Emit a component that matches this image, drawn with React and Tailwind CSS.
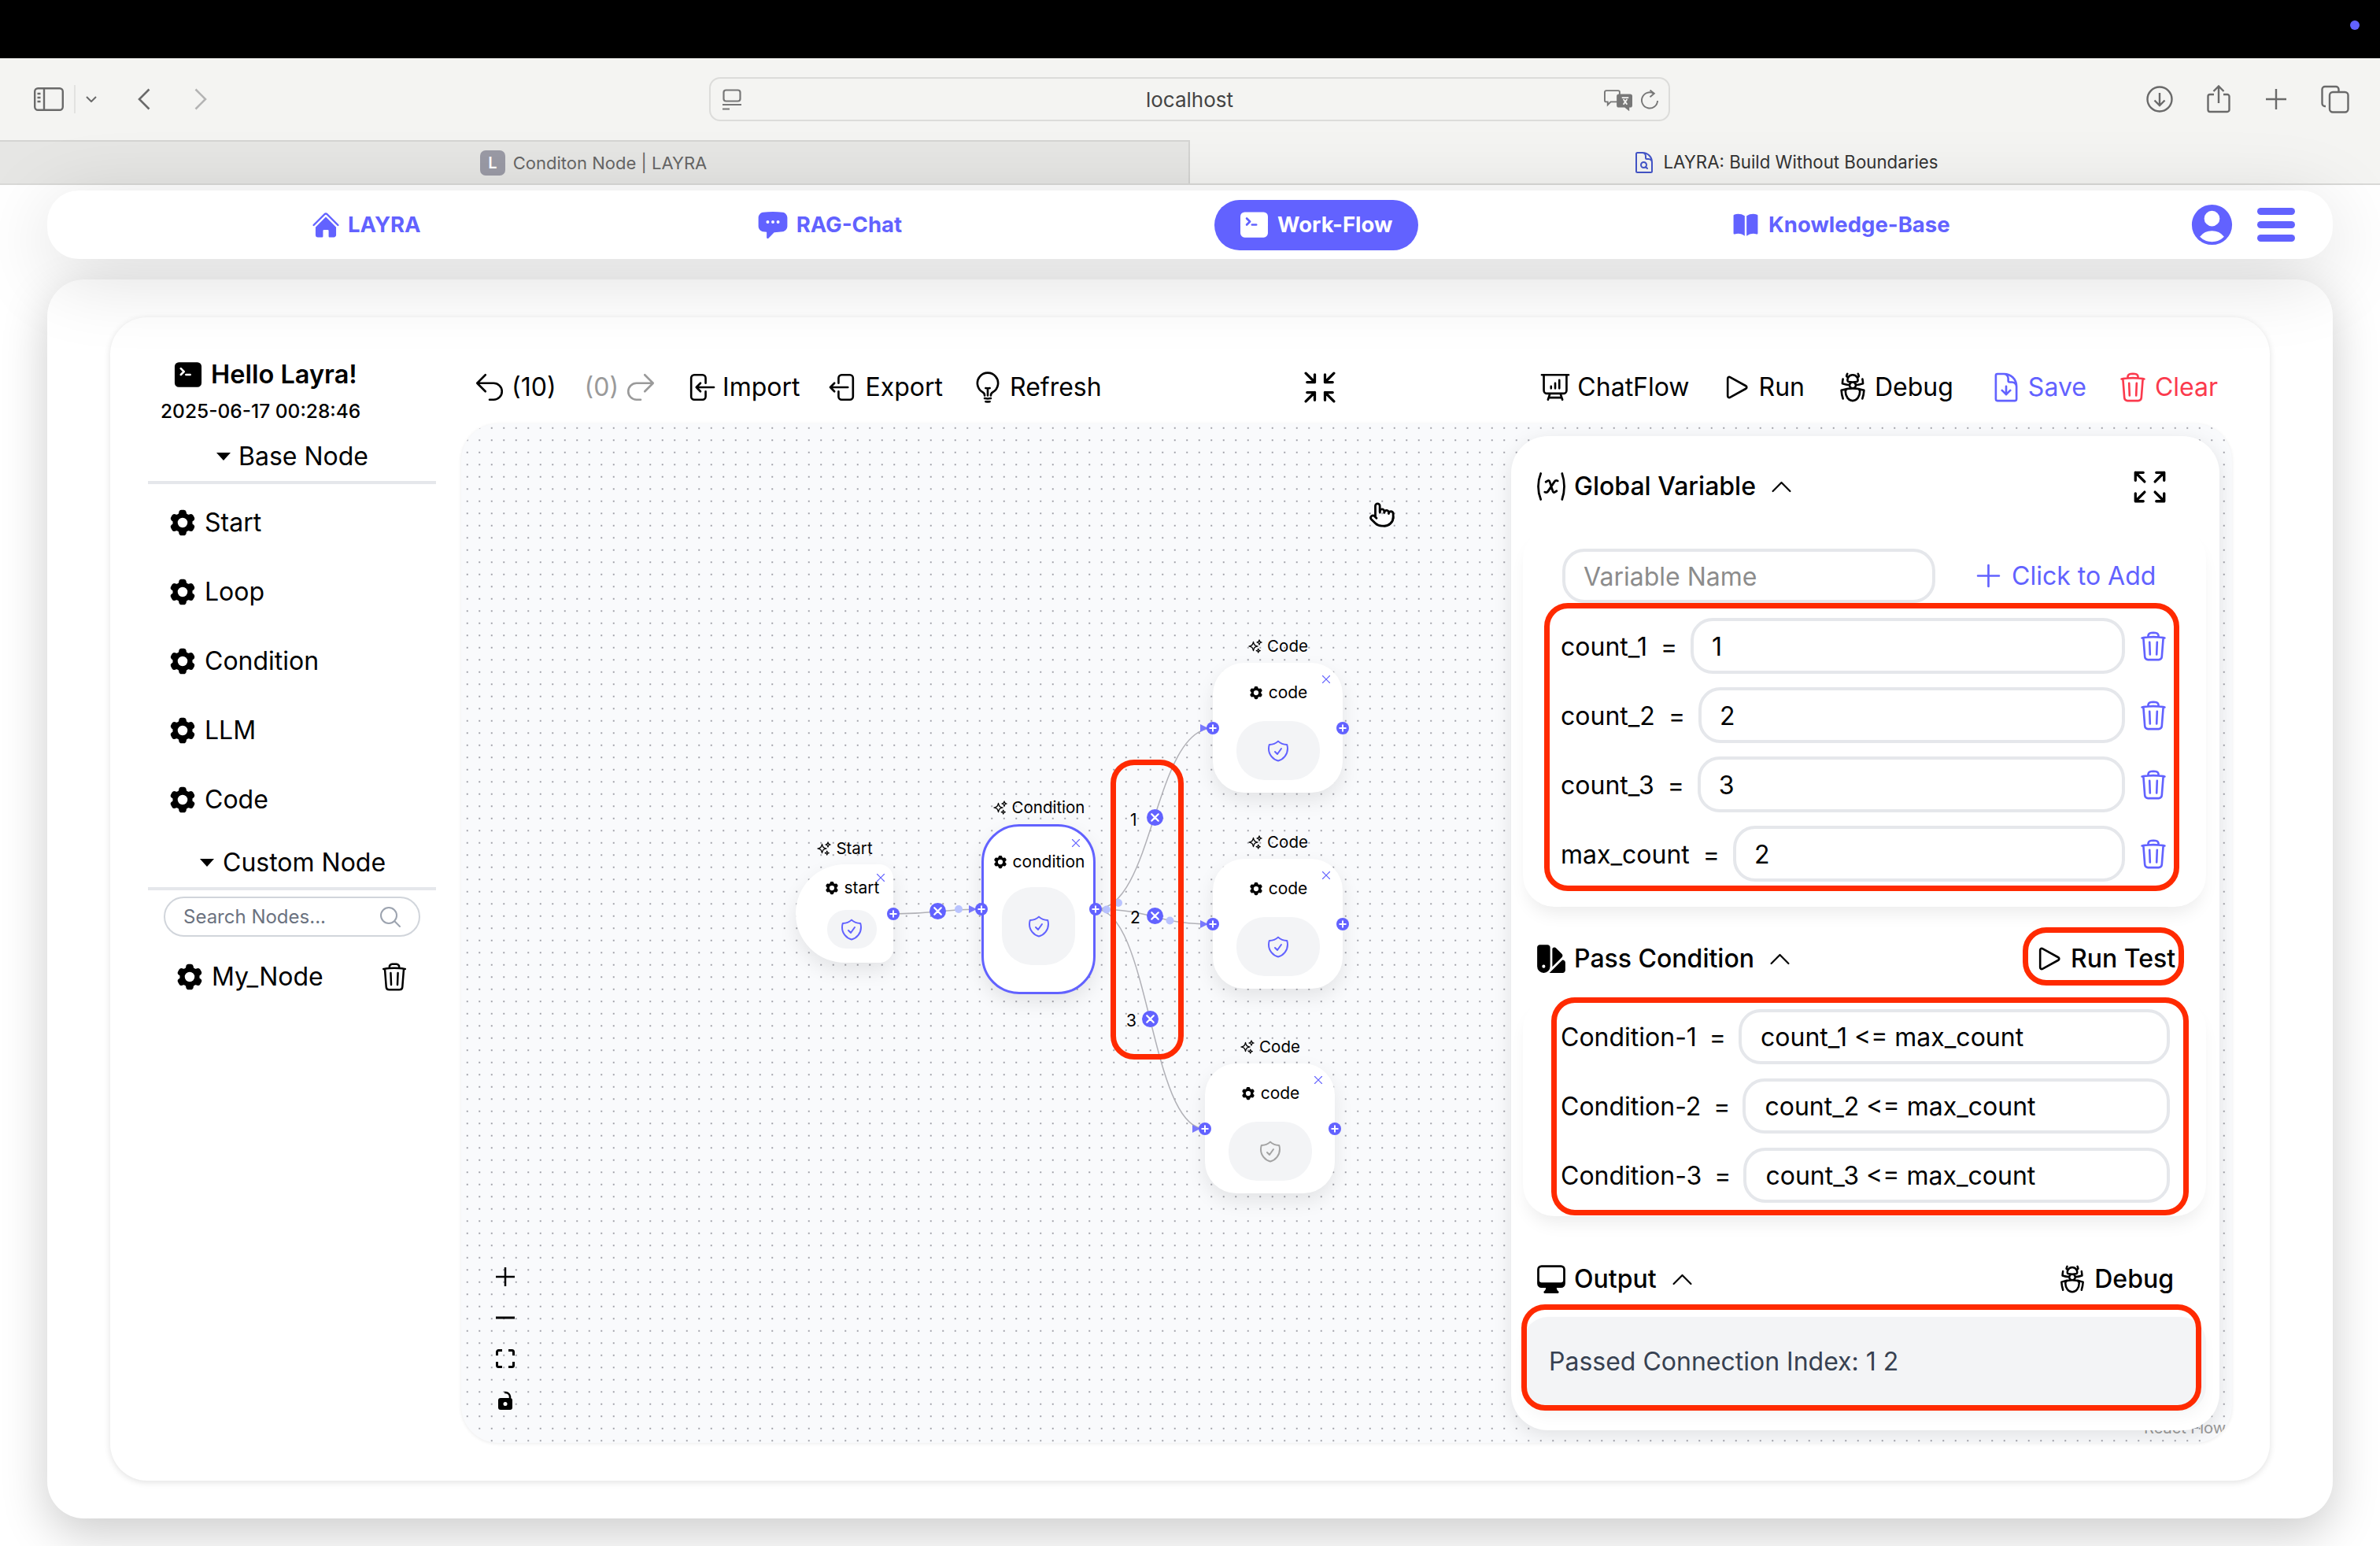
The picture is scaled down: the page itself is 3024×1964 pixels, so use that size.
import {
  HiHome, HiChatBubbleLeftEllipsis, HiCommandLine, HiBookOpen, HiUserCircle, HiCog6Tooth, HiSwatch,
  HiComputerDesktop, HiXMark, HiOutlineArrowUturnLeft, HiOutlineArrowUturnRight, HiOutlineArrowLeftEndOnRectangle,
  HiOutlineArrowLeftStartOnRectangle, HiOutlineLightBulb, HiOutlineArrowsPointingIn, HiOutlineArrowsPointingOut,
  HiOutlinePresentationChartBar, HiOutlinePlay, HiOutlineBugAnt, HiOutlineDocumentArrowDown, HiOutlineTrash,
  HiOutlineVariable, HiOutlineChevronUp, HiOutlinePlus, HiOutlineMagnifyingGlass, HiOutlineSparkles,
  HiOutlineShieldCheck, HiOutlineDocumentMagnifyingGlass,
} from "react-icons/hi2";
import { Pointer } from "lucide-react";

function Caret({ className }) {
  return (
    <svg viewBox="0 0 18 10" className={`h-[10px] w-[18px] ${className || ""}`}>
      <path d="M0 0h18l-9 10z" fill="#000" />
    </svg>
  );
}

function ChromeBar() {
  return (
    <div className="flex h-[104px] items-center bg-[#f4f4f2] pl-[43px] pr-[39px] text-[#6a6a6a]">
      <svg viewBox="0 0 38 30" className="h-[30px] w-[38px]" fill="none" stroke="currentColor" strokeWidth="2.4">
        <rect x="1.2" y="1.2" width="35.6" height="27.6" rx="4" />
        <path d="M13 1v28" />
        <path d="M4.5 8h4M4.5 13h4M4.5 18h4" />
      </svg>
      <div className="ml-[13px] h-[36px] w-[2px] bg-[#e3e3e1]" />
      <svg viewBox="0 0 14 8" className="ml-[13px] h-[8px] w-[14px]" fill="none" stroke="currentColor" strokeWidth="2">
        <path d="M1 1l6 6 6-6" />
      </svg>
      <svg viewBox="0 0 16 28" className="ml-[52px] h-[28px] w-[16px]" fill="none" stroke="currentColor" strokeWidth="2.6">
        <path d="M14.5 1.5L2 14l12.5 12.5" />
      </svg>
      <svg viewBox="0 0 16 28" className="ml-[56px] h-[28px] w-[16px] text-[#b4b4b4]" fill="none" stroke="currentColor" strokeWidth="2.6">
        <path d="M1.5 1.5L14 14 1.5 26.5" />
      </svg>
      <div className="relative ml-[638px] flex h-[56px] w-[1221px] items-center justify-center rounded-[14px] border-2 border-[#dcdcda] text-[26px] text-[#444]">
        <svg viewBox="0 0 24 27" className="absolute left-[15px] top-[13px] h-[27px] w-[24px]" fill="none" stroke="#777" strokeWidth="2.2">
          <rect x="1.5" y="1.5" width="21" height="14" rx="3" />
          <path d="M0 20h24M0 25.500h9" />
        </svg>
        localhost
        <svg viewBox="0 0 38 28" className="absolute right-[46px] top-[13px] h-[28px] w-[36px]" fill="none" stroke="#777" strokeWidth="2">
          <path d="M3 1.500h16a2 2 0 0 1 2 2v11a2 2 0 0 1-2 2H9l-4 4v-4H3a2 2 0 0 1-2-2v-11a2 2 0 0 1 2-2z" />
          <path d="M20 7h15a2 2 0 0 1 2 2v12a2 2 0 0 1-2 2h-2v4l-5-4h-8a2 2 0 0 1-2-2V9a2 2 0 0 1 2-2z" fill="#777" />
          <path d="M24 11h9M26 20l5-7M31 20l-5-7" stroke="#f4f4f2" />
        </svg>
        <svg viewBox="0 0 24 26" className="absolute right-[12px] top-[14px] h-[26px] w-[23px]" fill="none" stroke="#777" strokeWidth="2">
          <path d="M17 4.500A10.500 10.500 0 1 0 22 14" />
          <path d="M12 0l5.500 4.500L12 9" />
        </svg>
      </div>
      <div className="ml-auto flex items-center gap-[41px] text-[#6a6a6a]">
        <svg viewBox="0 0 34 34" className="mr-[2px] size-[34px]" fill="none" stroke="currentColor" strokeWidth="2.4">
          <circle cx="17" cy="17" r="15.500" />
          <path d="M17 9v16M10.500 18.500L17 25l6.500-6.500" />
        </svg>
        <svg viewBox="0 0 30 36" className="mr-[4px] h-[36px] w-[30px]" fill="none" stroke="currentColor" strokeWidth="2.4">
          <path d="M9 12H4a2.500 2.500 0 0 0-2.500 2.500v17A2.500 2.500 0 0 0 4 34h22a2.500 2.500 0 0 0 2.500-2.500v-17A2.500 2.500 0 0 0 26 12h-5" />
          <path d="M15 23V2M8.500 8L15 1.500 21.500 8" />
        </svg>
        <svg viewBox="0 0 26 26" className="mr-[3px] size-[26px]" fill="none" stroke="currentColor" strokeWidth="2.4">
          <path d="M13 0v26M0 13h26" />
        </svg>
        <svg viewBox="0 0 36 36" className="size-[36px]" fill="none" stroke="currentColor" strokeWidth="2.4">
          <path d="M6 27H5a3.500 3.500 0 0 1-3.500-3.500v-18A3.500 3.500 0 0 1 5 2h14a3.500 3.500 0 0 1 3.500 3.500V9" />
          <rect x="11" y="9" width="23.500" height="25.500" rx="4" />
        </svg>
      </div>
    </div>
  );
}

function TabBar() {
  return (
    <div className="flex h-[57px] border-b-2 border-[#d9d9d7] leading-none">
      <div className="flex w-[1512px] items-center justify-center gap-[10px] border-r-2 border-t-2 border-[#d4d4d2] bg-[#e6e6e4] pr-[2px] pt-[1px] text-[22px] text-[#666]">
        <div className="flex size-[32px] items-center justify-center rounded-[7px] bg-[#9a9aa5] text-[20px] font-semibold text-white">L</div>
        Conditon Node | LAYRA
      </div>
      <div className="flex flex-1 items-center justify-center gap-[8px] bg-[#f4f4f2] pt-[2px] text-[22.250px] text-[#333]">
        <HiOutlineDocumentMagnifyingGlass className="size-[32px] text-[#4355c8]" />
        LAYRA: Build Without Boundaries
      </div>
    </div>
  );
}

function NavBar() {
  return (
    <div className="relative z-10 mx-[60px] mt-[7px] flex h-[87px] items-center rounded-[40px] bg-white pl-[335px] text-[27.500px] font-bold text-[#6262ff] shadow-[0_20px_100px_rgba(0,0,0,0.15)]">
      <div className="flex items-center gap-[9px]">
        <HiHome className="size-[38px]" />
        LAYRA
      </div>
      <div className="ml-[426px] flex items-center gap-[9px]">
        <HiChatBubbleLeftEllipsis className="size-[42px]" />
        RAG-Chat
      </div>
      <div className="ml-[397px] flex h-[64px] w-[259px] items-center gap-[8px] rounded-full bg-[#6262ff] pl-[29px] text-white">
        <HiCommandLine className="size-[43px]" />
        Work-Flow
      </div>
      <div className="ml-[397px] flex items-center gap-[10px]">
        <HiBookOpen className="size-[38px]" />
        Knowledge-Base
      </div>
      <HiUserCircle className="ml-[301px] size-[63px]" />
      <div className="ml-[26px] flex w-[48px] flex-col gap-[8px]">
        <div className="h-[9px] rounded-full bg-[#6262ff]" />
        <div className="h-[9px] rounded-full bg-[#6262ff]" />
        <div className="h-[9px] rounded-full bg-[#6262ff]" />
      </div>
    </div>
  );
}

const baseNodes = ["Start", "Loop", "Condition", "LLM", "Code"];

function Sidebar() {
  return (
    <div className="w-[366px] shrink-0 pt-[56px] text-black">
      <div className="flex h-[34px] items-center gap-[8px] pl-[30px] text-[32.500px] font-semibold">
        <HiCommandLine className="size-[42px]" />
        Hello Layra!
      </div>
      <div className="mt-[14px] h-[30px] pl-[16px] text-[24.500px] font-medium leading-[30px]">2025-06-17 00:28:46</div>
      <div className="mt-[23px] flex h-[55px] items-center border-b-4 border-[#e5e7eb] pb-[11px] pl-[87px] text-[32px]">
        <Caret className="mr-[10px]" />
        Base Node
      </div>
      <div className="mt-[5px]">
        {baseNodes.map((name) => (
          <div key={name} className="flex h-[88px] items-center gap-[8px] pl-[24px] text-[32px]">
            <HiCog6Tooth className="size-[40px]" />
            {name}
          </div>
        ))}
      </div>
      <div className="mt-[16px] flex h-[55px] items-center border-b-4 border-[#e5e7eb] pb-[11px] pl-[66px] text-[32px]">
        <Caret className="mr-[11px]" />
        Custom Node
      </div>
      <div className="ml-[20px] mt-[8px] flex h-[51px] w-[326px] items-center justify-between rounded-full border-2 border-[#d1d5db] pl-[23px] pr-[20px] text-[24px] text-[#6b7280]">
        Search Nodes...
        <HiOutlineMagnifyingGlass className="size-[32px] text-[#9ca3af]" />
      </div>
      <div className="mt-[31px] flex h-[40px] items-center gap-[8px] pl-[33px] pr-[33px] text-[32px]">
        <HiCog6Tooth className="size-[40px]" />
        My_Node
        <HiOutlineTrash className="ml-auto size-[40px]" />
      </div>
    </div>
  );
}

function Tool({ icon: Icon, children, className }) {
  return (
    <div className={`flex items-center gap-[7px] ${className || ""}`}>
      <Icon className="size-[42px]" />
      {children}
    </div>
  );
}

function Toolbar() {
  return (
    <div className="flex h-[135px] items-center pl-[15px] pr-[18px] pt-[43px] text-[32px] text-black">
      <Tool icon={HiOutlineArrowUturnLeft}>(10)</Tool>
      <div className="ml-[36px] flex items-center gap-[7px] text-[#9a9a9a]">
        (0)
        <HiOutlineArrowUturnRight className="size-[42px]" />
      </div>
      <Tool icon={HiOutlineArrowLeftEndOnRectangle} className="ml-[34px]">Import</Tool>
      <Tool icon={HiOutlineArrowLeftStartOnRectangle} className="ml-[34px]">Export</Tool>
      <Tool icon={HiOutlineLightBulb} className="ml-[36px]">Refresh</Tool>
      <div className="flex flex-1 justify-center">
        <HiOutlineArrowsPointingIn className="size-[52px]" />
      </div>
      <div className="flex items-center">
        <Tool icon={HiOutlinePresentationChartBar}>ChatFlow</Tool>
        <Tool icon={HiOutlinePlay} className="ml-[39px]">Run</Tool>
        <Tool icon={HiOutlineBugAnt} className="ml-[40px]">Debug</Tool>
        <Tool icon={HiOutlineDocumentArrowDown} className="ml-[46px] text-[#6262ff]">Save</Tool>
        <Tool icon={HiOutlineTrash} className="ml-[38px] text-[#fb3a4d]">Clear</Tool>
      </div>
    </div>
  );
}

function Handle({ className }) {
  return (
    <svg viewBox="0 0 16 16" className={`absolute top-1/2 size-[16px] -translate-y-1/2 ${className}`}>
      <circle cx="8" cy="8" r="8" fill="#6262ff" />
      <path d="M8 3.500v9M3.500 8h9" stroke="#fff" strokeWidth="2" />
    </svg>
  );
}

function FlowNode({ title, name, className, chip, label, shield, close, leftHandle, rightHandle }) {
  return (
    <div className={`absolute flex flex-col items-center bg-white shadow-[0_10px_24px_rgba(0,0,0,0.09)] ${className}`}>
      <div className={`absolute bottom-full left-0 right-0 flex h-[28px] items-center justify-center gap-[5px] text-[20.500px] text-black ${label}`}>
        <HiOutlineSparkles className="size-[20px]" />
        {title}
      </div>
      <HiXMark className={`absolute size-[18px] text-[#6262ff] ${close}`} />
      <div className="flex h-[28px] items-center gap-[6px] text-[21px] text-black">
        <HiCog6Tooth className="size-[20px]" />
        {name}
      </div>
      <div className={`flex items-center justify-center bg-[#f3f4f6] ${chip}`}>
        <HiOutlineShieldCheck className={`size-[32px] ${shield || "text-[#6262ff]"}`} />
      </div>
      {leftHandle && <Handle className={leftHandle} />}
      <Handle className={rightHandle} />
    </div>
  );
}

function EdgeX({ className }) {
  return (
    <div className={`absolute flex size-[21px] items-center justify-center rounded-full bg-[#6262ff] ${className}`}>
      <HiXMark className="size-[17px] stroke-[1.5] text-white" />
    </div>
  );
}

function Edges() {
  return (
    <svg className="absolute inset-0 size-full" fill="none" stroke="#b1b1b7" strokeWidth="1.500">
      <path d="M549 623C605 623 605 617 661 617" />
      <path d="M806 617C880 617 880 387 955 387" />
      <path d="M806 617C880 617 880 636 955 636" />
      <path d="M806 617C875 617 875 896 945 896" />
      <g fill="#7b7bff" stroke="none">
        <path d="M645 612l10 5-10 5z" />
        <path d="M939 382l10 5-10 5z" />
        <path d="M939 631l10 5-10 5z" />
        <path d="M929 891l10 5-10 5z" />
      </g>
      <g fill="#b9c3ff" stroke="none">
        <circle cx="632" cy="617" r="5" />
        <circle cx="820" cy="617.500" r="5" />
        <circle cx="835" cy="609" r="5" />
        <circle cx="900.500" cy="631.500" r="5" />
      </g>
    </svg>
  );
}

function FlowControls() {
  return (
    <div className="absolute left-[44px] top-[1072px] flex w-[24px] flex-col items-center gap-[28px] text-black">
      <svg viewBox="0 0 24 24" className="size-[24px]" fill="none" stroke="currentColor" strokeWidth="2.500">
        <path d="M12 0v24M0 12h24" />
      </svg>
      <svg viewBox="0 0 24 24" className="size-[24px]" fill="none" stroke="currentColor" strokeWidth="3">
        <path d="M0 12h24" />
      </svg>
      <svg viewBox="0 0 24 24" className="size-[24px]" fill="none" stroke="currentColor" strokeWidth="3">
        <path d="M1.500 8V3.500a2 2 0 0 1 2-2H8M16 1.500h4.500a2 2 0 0 1 2 2V8M22.500 16v4.500a2 2 0 0 1-2 2H16M8 22.500H3.500a2 2 0 0 1-2-2V16" />
      </svg>
      <svg viewBox="0 0 24 26" className="h-[26px] w-[24px]">
        <path d="M11 3a6 6 0 0 1 7 5v3" fill="none" stroke="#000" strokeWidth="2.500" />
        <rect x="3" y="10" width="18" height="15" rx="3" fill="#000" />
        <circle cx="12" cy="17.500" r="2.500" fill="#fff" />
      </svg>
    </div>
  );
}

function FieldBox({ children, height, inset }) {
  return (
    <div className={`flex flex-1 items-center rounded-[28px] border-[4px] border-[#e5e7eb] bg-white pt-[2px] text-[32px] text-black ${height} ${inset}`}>
      {children}
    </div>
  );
}

const variables = [
  { name: "count_1", value: "1" },
  { name: "count_2", value: "2" },
  { name: "count_3", value: "3" },
  { name: "max_count", value: "2" },
];

const conditions = [
  { name: "Condition-1", value: "count_1 <= max_count" },
  { name: "Condition-2", value: "count_2 <= max_count" },
  { name: "Condition-3", value: "count_3 <= max_count" },
];

function SectionTitle({ icon: Icon, children, className }) {
  return (
    <div className={`flex items-center text-[32px] font-medium text-black ${className || ""}`}>
      <Icon className="mr-[7px] size-[44px]" />
      {children}
      <HiOutlineChevronUp className="ml-[15px] size-[35px]" />
    </div>
  );
}

function GlobalPanel() {
  return (
    <div className="absolute right-[16px] top-[16px] flex h-[1263px] w-[900px] flex-col rounded-[47px] bg-white shadow-[0_6px_24px_rgba(0,0,0,0.1)]">
      <div className="mt-[32px] flex h-[64px] items-center justify-between pl-[29px] pr-[62px]">
        <SectionTitle icon={HiOutlineVariable}>Global Variable</SectionTitle>
        <HiOutlineArrowsPointingOut className="size-[53px] text-black" />
      </div>

      <div className="ml-[15px] mr-[17px] mt-[20px] h-[482px] rounded-[40px] bg-white pl-[27px] pr-[34px] pt-[27px] shadow-[0_14px_22px_-6px_rgba(0,0,0,0.08)]">
        <div className="flex h-[69px] items-center">
          <div className="ml-[23px] flex h-[69px] w-[474px] items-center rounded-[28px] border-[4px] border-[#e5e7eb] pl-[23px] pt-[2px] text-[32px] text-[#8c8c8c]">
            Variable Name
          </div>
          <div className="ml-[46px] flex items-center gap-[8px] text-[32px] text-[#6262ff]">
            <HiOutlinePlus className="size-[43px]" />
            Click to Add
          </div>
        </div>
        <div className="flex h-[366px] flex-col gap-[17px] rounded-[30px] border-[7px] border-[#ff2a00] pl-[14px] pr-[5px] pt-[12px]">
          {variables.map((v) => (
            <div key={v.name} className="flex items-center text-[32px] text-black">
              <span className="pt-[2px]">{v.name}</span>
              <span className="mx-[17px] pt-[2px]">=</span>
              <FieldBox height="h-[71px]" inset="pl-[23px]">{v.value}</FieldBox>
              <HiOutlineTrash className="ml-[15px] size-[42px] text-[#6262ff]" />
            </div>
          ))}
        </div>
      </div>

      <div className="mt-[26px] flex h-[74px] items-center justify-between pl-[29px] pr-[45px]">
        <SectionTitle icon={HiSwatch} className="pt-[6px]">Pass Condition</SectionTitle>
        <div className="flex h-[74px] w-[205px] items-center gap-[6px] rounded-[30px] border-[7px] border-[#ff2a00] pl-[6px] pt-[6px] text-[32px] font-medium text-black">
          <HiOutlinePlay className="size-[42px]" />
          Run Test
        </div>
      </div>

      <div className="ml-[15px] mr-[17px] mt-[15px] h-[278px] rounded-[40px] bg-white pl-[36px] pr-[22px] shadow-[0_14px_22px_-6px_rgba(0,0,0,0.08)]">
        <div className="flex h-[277px] flex-col gap-[18px] rounded-[30px] border-[7px] border-[#ff2a00] pl-[5px] pr-[17px] pt-[8px]">
          {conditions.map((c) => (
            <div key={c.name} className="flex items-center text-[32px] text-black">
              <span className="pt-[2px]">{c.name}</span>
              <span className="mx-[16px] pt-[2px]">=</span>
              <FieldBox height="h-[70px]" inset="pl-[24px]">{c.value}</FieldBox>
            </div>
          ))}
        </div>
      </div>

      <div className="mt-[48px] flex h-[64px] items-center justify-between pl-[29px] pr-[58px]">
        <SectionTitle icon={HiComputerDesktop}>Output</SectionTitle>
        <div className="flex items-center gap-[8px] text-[32px] font-medium text-black">
          <HiOutlineBugAnt className="size-[40px]" />
          Debug
        </div>
      </div>

      <div className="relative ml-[15px] mr-[17px] mt-[16px] flex h-[120px] items-center rounded-[32px] bg-[#f3f4f6] pb-[6px] pl-[33px] text-[32px] text-[#374151] shadow-[0_8px_16px_rgba(0,0,0,0.03)]">
        Passed Connection Index: 1 2
        <div className="absolute -left-[2px] -top-[16px] right-[6px] h-[135px] rounded-[30px] border-[7px] border-[#ff2a00]" />
      </div>
    </div>
  );
}

function Canvas() {
  return (
    <div className="relative h-[1295px] overflow-hidden rounded-[47px] bg-[#f9fafc] bg-[radial-gradient(circle,#a0a0a8_0.8px,transparent_0.9px)] bg-[length:15.5px_15.5px] bg-[position:0_-2px] shadow-[0_1px_4px_rgba(0,0,0,0.08)]">
      <Edges />
      <FlowNode
        title="Start"
        name="start"
        label="mb-[6px]"
        close="right-[7px] top-[8px]"
        rightHandle="-right-[8px]"
        className="left-[425px] top-[560px] h-[125px] w-[124px] rounded-bl-[70px] rounded-br-[20px] rounded-tl-[70px] rounded-tr-[20px] pl-[18px] pt-[16px]"
        chip="mt-[14px] h-[49px] w-[63px] rounded-[24px]"
      />
      <FlowNode
        title="Condition"
        name="condition"
        label="mb-[10px]"
        close="right-[13px] top-[12px]"
        leftHandle="-left-[11px]"
        rightHandle="-right-[11px]"
        className="left-[661px] top-[509px] h-[216px] w-[145px] rounded-[48px] border-[3px] border-[#6262ff] pt-[31px]"
        chip="mt-[18px] h-[99px] w-[93px] rounded-[38px]"
      />
      <FlowNode
        title="Code"
        name="code"
        label="mb-[7px]"
        close="right-[12px] top-[12px]"
        leftHandle="-left-[8px]"
        rightHandle="-right-[8px]"
        className="left-[955px] top-[304px] h-[165px] w-[165px] rounded-[40px] pt-[24px]"
        chip="mt-[22px] h-[75px] w-[106px] rounded-[36px]"
      />
      <FlowNode
        title="Code"
        name="code"
        label="mb-[7px]"
        close="right-[12px] top-[12px]"
        leftHandle="-left-[8px]"
        rightHandle="-right-[8px]"
        className="left-[955px] top-[553px] h-[165px] w-[165px] rounded-[40px] pt-[24px]"
        chip="mt-[22px] h-[75px] w-[106px] rounded-[36px]"
      />
      <FlowNode
        title="Code"
        name="code"
        label="mb-[7px]"
        close="right-[12px] top-[12px]"
        leftHandle="-left-[8px]"
        rightHandle="-right-[8px]"
        className="left-[945px] top-[813px] h-[165px] w-[165px] rounded-[40px] pt-[24px]"
        chip="mt-[22px] h-[75px] w-[106px] rounded-[36px]"
        shield="text-[#a3a3a3]"
      />

      <EdgeX className="left-[595px] top-[609px]" />
      <EdgeX className="left-[871px] top-[490px]" />
      <EdgeX className="left-[871px] top-[615px]" />
      <EdgeX className="left-[865px] top-[746px]" />
      <div className="absolute left-[850px] top-[488px] text-[21px] text-black">1</div>
      <div className="absolute left-[850px] top-[612px] text-[21px] text-black">2</div>
      <div className="absolute left-[845px] top-[743px] text-[21px] text-black">3</div>
      <div className="absolute left-[825px] top-[427px] h-[381px] w-[93px] rounded-[30px] border-[7px] border-[#ff2a00]" />

      <Pointer className="absolute left-[1153px] top-[99px] size-[34px] fill-white stroke-[2] text-black" />
      <FlowControls />
      <div className="absolute bottom-[4px] right-[8px] text-[20px] text-[#999]">React Flow</div>
      <GlobalPanel />
    </div>
  );
}

export default function App() {
  return (
    <div className="h-[1964px] w-[3024px] overflow-hidden bg-white font-['Inter',sans-serif]">
      <div className="relative flex h-[74px] justify-end bg-black pr-[26px] pt-[26px]">
        <div className="size-[12px] rounded-full bg-[#6262ff]" />
      </div>
      <ChromeBar />
      <TabBar />
      <NavBar />
      <div className="mx-[60px] mt-[26px] h-[1574px] rounded-[47px] bg-white pt-[48px] shadow-[0_20px_60px_rgba(0,0,0,0.2)]">
        <div className="mx-[80px] flex h-[1478px] gap-[32px] rounded-[47px] bg-white pl-[48px] pr-[48px] shadow-[0_2px_8px_rgba(0,0,0,0.12)]">
          <Sidebar />
          <div className="min-w-0 flex-1">
            <Toolbar />
            <Canvas />
          </div>
        </div>
      </div>
    </div>
  );
}
